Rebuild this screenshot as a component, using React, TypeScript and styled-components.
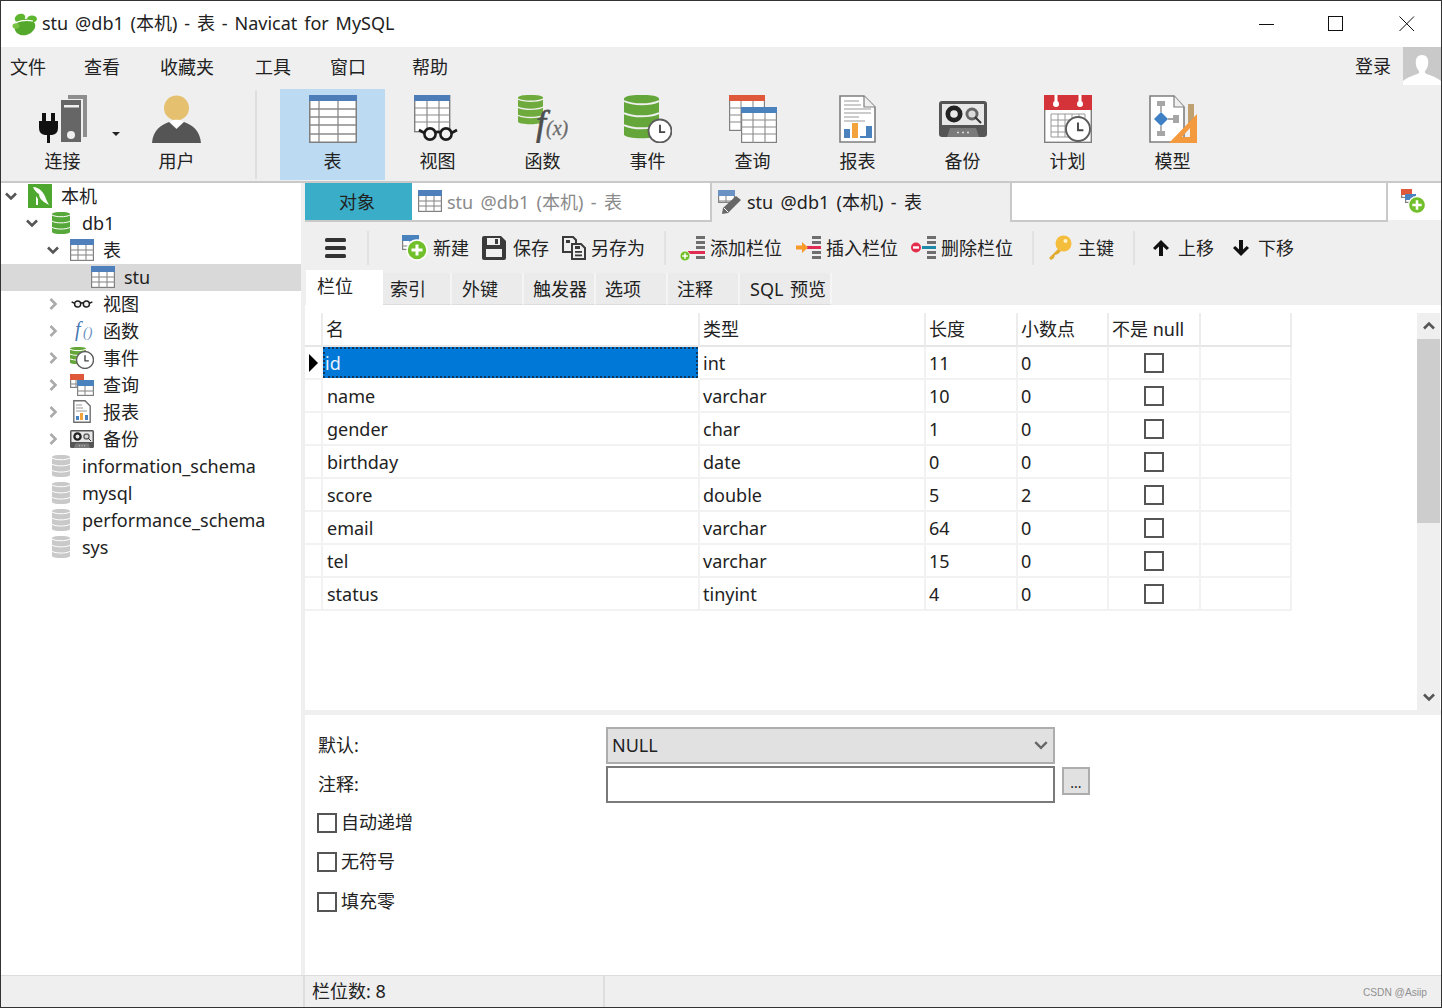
import React from "react";
import styled, { createGlobalStyle } from "styled-components";

const Global = createGlobalStyle`
  html, body { margin: 0; padding: 0; background: #fff; overflow: hidden; }
  * { box-sizing: border-box; }
  svg { display: block; flex: none; }
`;

const Root = styled.div`
  width: 1442px; height: 1008px; display: flex; flex-direction: column;
  border: 1px solid #333; border-bottom-width: 1px; background: #fff; color: #222;
  font-family: "Noto Sans", "Noto Sans CJK SC", sans-serif; font-size: 18px; line-height: 24px;
`;
const TitleBar = styled.div`height: 46px; display: flex; align-items: center; padding-left: 11px; background: #fff; flex: none;`;
const TitleText = styled.span`margin: 0 0 2px 4px; flex: 1; white-space: nowrap; word-spacing: 2.2px;`;
const WinBtn = styled.div<{ $w: number }>`width: ${p => p.$w}px; height: 46px; display: flex; align-items: center; justify-content: center;`;
const MenuBar = styled.div`height: 42px; flex: none; background: #efefef; display: flex; align-items: flex-start; padding-left: 9px;`;
const MenuItem = styled.span<{ $ml: number }>`margin-left: ${p => p.$ml}px; margin-top: 8px; white-space: nowrap;`;
const Login = styled.span`margin-left: auto; margin-top: 7px;`;
const Avatar = styled.div`width: 38px; height: 38px; margin-left: 12px; background: #c9c9c9;`;
const Toolbar = styled.div`height: 94px; flex: none; background: #efefef; border-bottom: 2px solid #c9c9c9; display: flex; align-items: flex-start; padding-left: 11px;`;
const ToolBtn = styled.div<{ $w?: number; $on?: boolean }>`
  width: ${p => p.$w ?? 105}px; height: 91px; padding-top: 6px; display: flex; flex-direction: column; align-items: center;
  background: ${p => (p.$on ? "#bcdaf2" : "transparent")};
`;
const ToolLabel = styled.span`margin-top: 6px; white-space: nowrap;`;
const Caret = styled.div`width: 12px; margin-left: -1px; padding-top: 43px;`;
const ToolSep = styled.div`width: 2px; height: 88px; margin: 2px 23px 0 26px; background: #dedede;`;

const Body = styled.div`flex: 1; min-height: 0; display: flex;`;
const Sidebar = styled.div`width: 300px; flex: none; background: #fff;`;
const Splitter = styled.div`width: 4px; flex: none; background: #efefef;`;
const TreeRow = styled.div<{ $d: number; $sel?: boolean }>`
  height: 27px; display: flex; align-items: center; padding: 0 0 2px ${p => 1 + p.$d * 21}px;
  background: ${p => (p.$sel ? "#d9d9d9" : "transparent")}; white-space: nowrap;
`;
const ArrowBox = styled.div`width: 18px; display: flex; justify-content: center; margin-right: 8px;`;
const TreeIcon = styled.div`width: 24px; margin-right: 9px; display: flex; justify-content: center;`;

const Main = styled.div`flex: 1; min-width: 0; display: flex; flex-direction: column; background: #efefef;`;
const TabBar = styled.div`height: 39px; flex: none; display: flex; align-items: stretch;`;
const ObjTab = styled.div`width: 107px; background: #3aaec8; border-bottom: 2px solid #c9c9c9; padding: 7px 0 0 34px;`;
const DocTab = styled.div<{ $on?: boolean; $w: number }>`
  width: ${p => p.$w}px; display: flex; align-items: flex-start; gap: 5px; padding: 7px 0 0 6px; word-spacing: 2.7px;
  background: ${p => (p.$on ? "#efefef" : "#fff")}; color: ${p => (p.$on ? "#222" : "#8a8a8a")};
  border-right: 2px solid #c9c9c9; border-bottom: ${p => (p.$on ? "0" : "2px solid #c9c9c9")}; white-space: nowrap;
`;
const TabFill = styled.div`flex: 1; background: #fff; border-right: 2px solid #c9c9c9; border-bottom: 2px solid #c9c9c9;`;
const TabAdd = styled.div`width: 53px; background: #fff; border-bottom: 2px solid #efefef; padding: 6px 0 0 12px;`;

const SubBar = styled.div`height: 48px; flex: none; display: flex; align-items: center; padding: 4px 0 0 20px;`;
const Sep = styled.div<{ $ml: number }>`width: 2px; height: 34px; background: #e2e2e2; margin-left: ${p => p.$ml}px;`;
const Item = styled.div<{ $ml?: number; $gap?: number }>`display: flex; align-items: center; margin-left: ${p => p.$ml ?? 0}px; gap: ${p => p.$gap ?? 5}px; white-space: nowrap;`;

const SubTabs = styled.div`height: 35px; flex: none; display: flex; align-items: flex-end; padding-left: 1px;`;
const SubTab = styled.div<{ $w: number; $pl: number; $on?: boolean }>`
  width: ${p => p.$w}px; height: ${p => (p.$on ? 35 : 32)}px; padding: 4px 0 0 ${p => p.$pl}px; white-space: nowrap; word-spacing: 2px;
  background: ${p => (p.$on ? "#fff" : "#ebebeb")};
  border-right: 2px solid ${p => (p.$on ? "#fff" : "#f5f5f5")};
  border-bottom: ${p => (p.$on ? "0" : "1px solid #dcdcdc")};
`;

const GridPane = styled.div`height: 405px; flex: none; background: #fff; display: flex; padding-top: 8px;`;
const GridArea = styled.div`width: 1112px; flex: none;`;
const Table = styled.div`display: grid; grid-template-columns: 18px 377px 226px 92px 91px 92px 91px; grid-template-rows: 34px; grid-auto-rows: 33px; width: 987px;`;
const Head = styled.div`height: 34px; padding-left: 3px; display: flex; align-items: center; border-right: 2px solid #ececec; border-bottom: 2px solid #e6e6e6; white-space: nowrap;`;
const Cell = styled.div<{ $center?: boolean; $pl?: number }>`
  display: flex; align-items: center; padding-left: ${p => (p.$center ? 0 : p.$pl ?? 3)}px; border-right: 2px solid #f2f2f2; border-bottom: 2px solid #f2f2f2;
  justify-content: ${p => (p.$center ? "center" : "flex-start")};
`;
const SelCell = styled.div`
  display: flex; align-items: center; padding-left: 2px; background: #0078d7; color: #e8f2fb;
  outline: 2px dotted #12365a; outline-offset: -2px; margin-bottom: 2px; margin-right: 2px;
`;
const Indicator = styled.div`display: flex; align-items: center; justify-content: center; border-right: 2px solid #f2f2f2; border-bottom: 2px solid #f2f2f2;`;
const Box = styled.div`width: 20px; height: 20px; border: 2px solid #555; background: #fff; flex: none;`;
const Scroll = styled.div`width: 23px; flex: none; background: #efefef; display: flex; flex-direction: column;`;
const ScrollBtn = styled.div<{ $end?: boolean }>`height: 26px; flex: none; display: flex; align-items: center; justify-content: center; margin-top: ${p => (p.$end ? "auto" : "0")};`;
const Thumb = styled.div`height: 184px; flex: none; background: #cdcdcd;`;
const HSplit = styled.div`height: 5px; flex: none; background: #efefef;`;

const Form = styled.div`flex: 1; min-height: 0; background: #fff; padding: 12px 0 0 13px;`;
const FormGrid = styled.div`display: grid; grid-template-columns: 288px 449px 35px; grid-template-rows: 37px 37px; row-gap: 2px; align-items: center;`;
const FormLabel = styled.span`padding-bottom: 2px;`;
const Select = styled.div`height: 37px; background: #e1e1e1; border: 2px solid #adadad; display: flex; align-items: center; justify-content: space-between; padding: 0 4px 2px 4px;`;
const Input = styled.div`height: 37px; background: #fff; border: 2px solid #7a7a7a;`;
const Dots = styled.div`width: 28px; height: 28px; margin-left: 7px; margin-top: -8px; background: #e1e1e1; border: 2px solid #adadad; font-size: 14px; line-height: 28px; text-align: center;`;
const CheckRow = styled.div`height: 39.5px; display: flex; align-items: center; gap: 4px; margin-left: -1px;`;
const CheckText = styled.span`padding-bottom: 2px;`;

const Status = styled.div`height: 32px; flex: none; display: flex; background: #efefef; border-top: 1px solid #dcdcdc; font-size: 18px;`;
const StatusCell = styled.div<{ $w: number }>`width: ${p => p.$w}px; flex: none; border-right: 2px solid #dedede; padding: 3px 0 0 7px; white-space: nowrap;`;
const StatusEnd = styled.div`flex: 1; display: flex; justify-content: flex-end; align-items: flex-end; padding: 0 14px 8px 0;`;
const Mark = styled.span`font-family: "Liberation Sans", sans-serif; font-size: 10.2px; line-height: 12px; color: #8f8f8f;`;

/* ---------- icons ---------- */
type S = { s?: number };
const Chev = ({ d = "down", c = "#555", s = 14, w = 2.6 }: { d?: "down" | "up" | "right"; c?: string; s?: number; w?: number }) => {
  const p = d === "down" ? "M2 4.5 7 9.5 12 4.5" : d === "up" ? "M2 9.5 7 4.5 12 9.5" : "M4.5 2 9.5 7 4.5 12";
  return <svg width={s} height={s} viewBox="0 0 14 14"><path d={p} fill="none" stroke={c} strokeWidth={w} /></svg>;
};

const Lines = ({ x, y, w, h, cols, rows, c = "#8a8a8a", sw = 1 }: { x: number; y: number; w: number; h: number; cols: number[]; rows: number[]; c?: string; sw?: number }) => (
  <g stroke={c} strokeWidth={sw} fill="none">
    {cols.map(v => <path key={"c" + v} d={`M${x + v} ${y}V${y + h}`} />)}
    {rows.map(v => <path key={"r" + v} d={`M${x} ${y + v}H${x + w}`} />)}
  </g>
);

const TableBig = ({ s = 48 }: S) => (
  <svg width={s} height={s} viewBox="0 0 48 48">
    <rect x=".75" y=".75" width="46.5" height="46.5" fill="#fff" stroke="#7f7f7f" strokeWidth="1.5" />
    <Lines x={1} y={6} w={46} h={41} cols={[9, 28]} rows={[8, 16, 24, 33]} sw={1.3} />
    <rect width="48" height="6" fill="#4d7db8" />
  </svg>
);
const Glasses = ({ x, y, k = 1 }: { x: number; y: number; k?: number }) => (
  <g transform={`translate(${x} ${y}) scale(${k})`} fill="none" stroke="#1c1c1c" strokeWidth="2.6">
    <circle cx="14" cy="7" r="5.6" fill="#f3f3f3" /><circle cx="30" cy="7" r="5.6" fill="#f3f3f3" />
    <path d="M19 6c2-1.5 4-1.5 6 0M8.5 6 3 3M35.5 6 41 3" />
  </g>
);
const ViewIcon = ({ s = 48 }: S) => (
  <svg width={s} height={s} viewBox="0 0 48 48">
    <rect x=".7" y=".7" width="35" height="36" fill="#fff" stroke="#7f7f7f" strokeWidth="1.4" />
    <Lines x={1} y={6} w={35} h={31} cols={[12, 24]} rows={[7, 14, 21]} sw={1.2} />
    <rect width="36" height="6" fill="#4d7db8" />
    <Glasses x={2} y={32} />
  </svg>
);
const DbShape = ({ x, y, w, h, c, bg = "#fff" }: { x: number; y: number; w: number; h: number; c: string; bg?: string }) => {
  const r = h * 0.09;
  return (
    <g>
      <path d={`M${x} ${y + r}C${x} ${y - r * .4} ${x + w} ${y - r * .4} ${x + w} ${y + r}V${y + h - r}C${x + w} ${y + h + r * .4} ${x} ${y + h + r * .4} ${x} ${y + h - r}Z`} fill={c} />
      <g fill="none" stroke={bg} strokeWidth={Math.max(1, h * .045)}>
        <path d={`M${x} ${y + h * .14}C${x + w * .25} ${y + h * .24} ${x + w * .75} ${y + h * .24} ${x + w} ${y + h * .14}`} />
        <path d={`M${x} ${y + h * .42}C${x + w * .25} ${y + h * .52} ${x + w * .75} ${y + h * .52} ${x + w} ${y + h * .42}`} />
        <path d={`M${x} ${y + h * .7}C${x + w * .25} ${y + h * .8} ${x + w * .75} ${y + h * .8} ${x + w} ${y + h * .7}`} />
      </g>
    </g>
  );
};
const FuncIcon = () => (
  <svg width="50" height="48" viewBox="0 0 50 48">
    <DbShape x={0} y={0} w={25} h={29} c="#6fab3c" bg="#efefef" />
    <text x="18" y="40" fontFamily="'Liberation Serif', serif" fontStyle="italic" fontSize="36" fill="#4d4d4d" stroke="#4d4d4d" strokeWidth=".6">f</text>
    <text x="28" y="40" fontFamily="'Liberation Serif', serif" fontStyle="italic" fontSize="20" fill="#6a6a6a" stroke="#6a6a6a" strokeWidth=".3">(x)</text>
  </svg>
);
const ClockMark = ({ cx, cy, r, bg = "#fff" }: { cx: number; cy: number; r: number; bg?: string }) => (
  <g>
    <circle cx={cx} cy={cy} r={r} fill={bg} stroke="#5c5c5c" strokeWidth={r * .16} />
    <path d={`M${cx} ${cy - r * .55}V${cy + r * .1}H${cx + r * .45}`} fill="none" stroke="#444" strokeWidth={r * .16} />
  </g>
);
const EventIcon = () => (
  <svg width="48" height="48" viewBox="0 0 48 48">
    <DbShape x={0} y={0} w={35} h={43} c="#64a639" bg="#efefef" />
    <ClockMark cx={36} cy={36} r={11.5} />
  </svg>
);
const HeadTable = ({ x, y, w, h, c, cols, rows }: { x: number; y: number; w: number; h: number; c: string; cols: number[]; rows: number[] }) => (
  <g>
    <rect x={x + .6} y={y + .6} width={w - 1.2} height={h - 1.2} fill="#fff" stroke="#808080" strokeWidth="1.2" />
    <Lines x={x} y={y + 6} w={w} h={h - 6} cols={cols} rows={rows} sw={1.1} />
    <rect x={x} y={y} width={w} height={6} fill={c} />
  </g>
);
const QueryIcon = () => (
  <svg width="48" height="48" viewBox="0 0 48 48">
    <HeadTable x={0} y={0} w={36} h={36} c="#e0583a" cols={[12, 24]} rows={[7, 14, 21]} />
    <HeadTable x={12} y={12} w={36} h={36} c="#4a82bd" cols={[12, 24]} rows={[7, 14, 21]} />
  </svg>
);
const ReportIcon = () => (
  <svg width="37" height="48" viewBox="0 0 37 48">
    <path d="M1 1H25L36 12V47H1Z" fill="#fff" stroke="#7f7f7f" strokeWidth="1.6" />
    <path d="M25 1V12H36" fill="#f0f0f0" stroke="#7f7f7f" strokeWidth="1.2" />
    <path d="M5 6H20M5 10H22M5 14H32M5 18H32M5 22H20M5 26H26" stroke="#9a9a9a" strokeWidth="1.1" />
    <rect x="5" y="34" width="6" height="9" fill="#4a82bd" /><rect x="13" y="28" width="6" height="15" fill="#f2a33c" />
    <rect x="21" y="41" width="6" height="2" fill="#4a82bd" /><rect x="27" y="31" width="6" height="12" fill="#4a82bd" />
  </svg>
);
const Cassette = ({ s = 48 }: S) => (
  <svg width={s} height={s} viewBox="0 0 48 36">
    <rect width="48" height="36" rx="3" fill="#555" />
    <rect x="3" y="3" width="42" height="21" fill="#e8e8e8" />
    <circle cx="15" cy="13" r="8.500" fill="#222" /><circle cx="15" cy="13" r="3.800" fill="#e8e8e8" />
    <circle cx="33" cy="13" r="6.500" fill="#666" /><circle cx="33" cy="13" r="3.600" fill="#dcdcdc" />
    <path d="M36 16l6 6" stroke="#333" strokeWidth="2" />
    <path d="M8 36l3-9H37l3 9Z" fill="#7a7a7a" />
    <path d="M18 31.500h2M23 31.500h2M28 31.500h2" stroke="#ddd" strokeWidth="1.6" />
  </svg>
);
const PlanIcon = () => (
  <svg width="48" height="48" viewBox="0 0 48 48">
    <rect x=".7" y="8" width="46.6" height="39.3" fill="#fff" stroke="#7f7f7f" strokeWidth="1.4" />
    <rect width="48" height="15" fill="#d5333a" />
    <path d="M12 0v8M36 0v8" stroke="#fff" strokeWidth="3" /><circle cx="12" cy="9" r="3" fill="#fff" /><circle cx="36" cy="9" r="3" fill="#fff" />
    <Lines x={7} y={19} w={34} h={23} cols={[0, 7, 14, 21, 28, 34]} rows={[0, 6, 12, 18, 23]} c="#999" />
    <ClockMark cx={34} cy={34} r={12} />
  </svg>
);
const ModelIcon = () => (
  <svg width="48" height="48" viewBox="0 0 48 48">
    <path d="M1 1H25L35 12V47H1Z" fill="#fff" stroke="#7f7f7f" strokeWidth="1.6" />
    <path d="M25 1V12H35" fill="#efefef" stroke="#7f7f7f" strokeWidth="1.2" />
    <rect x="8" y="6" width="8" height="5" fill="#a6a6a6" /><rect x="8" y="36" width="8" height="5" fill="#a6a6a6" /><rect x="24" y="20" width="6" height="8" fill="#a6a6a6" />
    <path d="M12 11V17M12 31V36M19 24H24" stroke="#8a8a8a" strokeWidth="1.3" />
    <path d="M12 17 19 24 12 31 5 24Z" fill="#3f7fc4" />
    <rect x="39" y="9" width="6" height="24" fill="#bfa070" />
    <path d="M48 19V48H20ZM41 33 33 42H41Z" fill="#f39a3f" fillRule="evenodd" />
  </svg>
);
const ConnectIcon = () => (
  <svg width="48" height="48" viewBox="0 0 48 48">
    <path d="M29 0H48V42H44V4H29Z" fill="#8e8e8e" />
    <rect x="22" y="5" width="20" height="42" fill="#666" />
    <rect x="25" y="10" width="15" height="2.500" fill="#efefef" /><circle cx="32" cy="40" r="4" fill="#efefef" />
    <path d="M3 18h4v8h5v-8h4v8h3v7q0 6-6 7h-2v8H8v-8H6q-6-1-6-7v-7h3Z" fill="#111" />
  </svg>
);
const UserIcon = () => (
  <svg width="49" height="48" viewBox="0 0 49 48">
    <circle cx="24.5" cy="13" r="12.5" fill="#e5c06f" />
    <path d="M0 48C1 35 9 30 17 27L24.5 34 32 27C40 30 48 35 49 48Z" fill="#555" />
    <path d="M18 26.5 24.5 33 31 26.5C27 24 22 24 18 26.5Z" fill="#fff" />
  </svg>
);
const LogoIcon = () => (
  <svg width="26" height="24" viewBox="0 0 26 24">
    <ellipse cx="13" cy="15" rx="10.500" ry="8" fill="#54a82c" transform="rotate(-20 13 15)" />
    <ellipse cx="8" cy="6" rx="5.500" ry="4" fill="#5eb52f" transform="rotate(-25 8 6)" />
    <ellipse cx="20" cy="7" rx="5" ry="3.500" fill="#5eb52f" />
    <ellipse cx="4" cy="14" rx="3.500" ry="2.800" fill="#79c143" />
    <path d="M4 10.500c5-2 11-2.500 17-1.500" stroke="#fff" strokeWidth="1.200" fill="none" />
  </svg>
);
const AvatarArt = () => (
  <svg width="38" height="38" viewBox="0 0 38 38">
    <path d="M19 8c5 0 7 4 6 10-.5 3-2 5-3 6v2c3 2 10 3 16 8v4H0v-4c6-5 13-6 16-8v-2c-1-1-2.500-3-3-6-1-6 1-10 6-10Z" fill="#fff" />
  </svg>
);
const MysqlIcon = () => (
  <svg width="24" height="24" viewBox="0 0 24 24">
    <rect width="24" height="24" fill="#4ea72e" />
    <path d="M5 3c6 0 11 5 13 12l3 6-5-3C13 16 11 13 11 10 9 9 6 6 5 3Z" fill="#fff" />
    <path d="M8 12v9h2v-6Z" fill="#fff" />
  </svg>
);
const DbTiny = ({ c }: { c: string }) => (
  <svg width="18" height="22" viewBox="0 0 18 22"><DbShape x={0} y={0} w={18} h={22} c={c} /></svg>
);
const TableTiny = () => (
  <svg width="24" height="22" viewBox="0 0 24 22">
    <HeadTable x={0} y={0} w={24} h={22} c="#4f80bb" cols={[8, 16]} rows={[5, 10]} />
  </svg>
);
const GlassesTiny = () => <svg width="24" height="12" viewBox="0 0 44 14"><Glasses x={0} y={0} /></svg>;
const FuncTiny = () => (
  <svg width="24" height="24" viewBox="0 0 24 24">
    <text x="5" y="17" fontFamily="'Liberation Serif', serif" fontStyle="italic" fontSize="20" fill="#4679b6">f</text>
    <text x="13" y="18" fontFamily="'Liberation Serif', serif" fontStyle="italic" fontSize="14" fill="#6a8fbf">()</text>
  </svg>
);
const EventTiny = () => (
  <svg width="24" height="22" viewBox="0 0 24 22">
    <DbShape x={0} y={0} w={16} h={17} c="#64a639" /><ClockMark cx={15} cy={13} r={8.5} />
  </svg>
);
const QueryTiny = () => (
  <svg width="24" height="22" viewBox="0 0 24 22">
    <HeadTable x={0} y={0} w={14} h={14} c="#e0583a" cols={[6]} rows={[4]} />
    <HeadTable x={7} y={6} w={17} h={16} c="#4a82bd" cols={[8]} rows={[5]} />
  </svg>
);
const ReportTiny = () => (
  <svg width="18" height="23" viewBox="0 0 18 23">
    <path d="M.8.8H12L17.200 6V22.200H.8Z" fill="#fff" stroke="#6f6f6f" strokeWidth="1.4" />
    <path d="M3 5H9M3 8H10M3 11H14" stroke="#999" />
    <rect x="3" y="16" width="3" height="4" fill="#4a82bd" /><rect x="7" y="13" width="3" height="7" fill="#f2a33c" /><rect x="12" y="15" width="3" height="5" fill="#4a82bd" />
  </svg>
);
const PlusDot = ({ cx, cy, r }: { cx: number; cy: number; r: number }) => (
  <g>
    <circle cx={cx} cy={cy} r={r} fill="#71c02b" stroke="#fff" strokeWidth={r * .15} />
    <path d={`M${cx - r * .55} ${cy}H${cx + r * .55}M${cx} ${cy - r * .55}V${cy + r * .55}`} stroke="#fff" strokeWidth={r * .3} />
  </g>
);
const NewIcon = () => (
  <svg width="26" height="26" viewBox="0 0 26 26">
    <HeadTable x={0} y={0} w={17} h={15} c="#4a82bd" cols={[8]} rows={[5]} />
    <PlusDot cx={15} cy={15} r={10} />
  </svg>
);
const SaveIcon = () => (
  <svg width="24" height="24" viewBox="0 0 24 24">
    <path d="M2 0H19L24 5V22a2 2 0 0 1-2 2H2a2 2 0 0 1-2-2V2A2 2 0 0 1 2 0Z" fill="#3a3a3a" />
    <rect x="5" y="2" width="13" height="7" fill="#f0f0f0" /><rect x="13" y="3" width="3" height="5" fill="#3a3a3a" />
    <rect x="4" y="13" width="16" height="8" fill="#f0f0f0" />
  </svg>
);
const SaveAsIcon = () => (
  <svg width="24" height="24" viewBox="0 0 24 24">
    <path d="M1 1H11L14 4V16H1Z" fill="#efefef" stroke="#3a3a3a" strokeWidth="2" />
    <path d="M4 4H8V7H4Z" fill="#3a3a3a" />
    <path d="M10 8H19L23 12V23H10Z" fill="#efefef" stroke="#3a3a3a" strokeWidth="2" />
    <rect x="13" y="15" width="7" height="1.800" fill="#3a3a3a" /><rect x="13" y="18.500" width="7" height="1.800" fill="#3a3a3a" />
    <rect x="13" y="10" width="5" height="3" fill="#3a3a3a" />
  </svg>
);
const Bars = ({ x, hi, c }: { x: number; hi: number; c: string }) => (
  <g>
    {[1, 6, 11, 16, 21].map((y, i) => <rect key={y} x={x} y={y} width="9" height="3" fill={i === hi ? c : "#6e6e6e"} />)}
  </g>
);
const AddColIcon = () => (
  <svg width="25" height="26" viewBox="0 0 25 26"><Bars x={16} hi={3} c="#e02b52" /><rect x="8" y="16" width="8" height="3" fill="#e02b52" /><PlusDot cx={5} cy={21} r={5} /></svg>
);
const InsColIcon = () => (
  <svg width="25" height="26" viewBox="0 0 25 26"><Bars x={16} hi={2} c="#e02b52" /><rect x="11" y="11" width="5" height="3" fill="#e02b52" /><path d="M0 10.500H6V7l6 5.500-6 5.500v-3.500H0Z" fill="#f79a2a" /></svg>
);
const DelColIcon = () => (
  <svg width="25" height="26" viewBox="0 0 25 26"><Bars x={16} hi={2} c="#1c8aa8" /><rect x="11" y="11" width="5" height="3" fill="#1c8aa8" /><circle cx="5" cy="12.500" r="5" fill="#e32d4d" /><rect x="2" y="11.300" width="6" height="2.400" fill="#fff" /></svg>
);
const KeyIcon = () => (
  <svg width="24" height="26" viewBox="0 0 24 26">
    <path d="M10 14 1 23l2 2 3-2 1-3 3-1 3-3Z" fill="#e0ab33" />
    <circle cx="15.500" cy="8.500" r="8" fill="#f4bd3c" /><circle cx="17.500" cy="6" r="2" fill="#fff3c9" />
  </svg>
);
const ArrowIcon = ({ up }: { up?: boolean }) => (
  <svg width="18" height="18" viewBox="0 0 18 18">
    <path d={up ? "M9 1 17 9l-2.200 2L11 7.500V17H7V7.500L3.200 11 1 9Z" : "M9 17 1 9l2.200-2L7 10.500V1h4V10.500L14.800 7 17 9Z"} fill="#111" />
  </svg>
);
const Hamburger = () => (
  <svg width="21" height="20" viewBox="0 0 21 20"><rect width="21" height="4" rx="1.500" fill="#333" /><rect y="8" width="21" height="4" rx="1.500" fill="#333" /><rect y="16" width="21" height="4" rx="1.500" fill="#333" /></svg>
);
const EditTabIcon = () => (
  <svg width="24" height="24" viewBox="0 0 24 24">
    <HeadTable x={0} y={0} w={17} h={13} c="#6b92c4" cols={[8]} rows={[5]} />
    <path d="M18 6l5 4L10 23l-6 1 1-6Z" fill="#666" /><path d="M6 18l4 4" stroke="#fff" />
  </svg>
);
const TabPlusIcon = () => (
  <svg width="26" height="26" viewBox="0 0 26 26">
    <HeadTable x={1} y={0} w={11} h={9} c="#e0583a" cols={[5]} rows={[]} />
    <HeadTable x={5} y={5} w={11} h={9} c="#4a82bd" cols={[5]} rows={[]} />
    <PlusDot cx={17} cy={16} r={8.500} />
  </svg>
);

/* ---------- data ---------- */
const menu = [["文件", 0], ["查看", 38], ["收藏夹", 40], ["工具", 41], ["窗口", 39], ["帮助", 46]] as const;
const tools: [string, React.ReactNode][] = [
  ["视图", <ViewIcon />], ["函数", <FuncIcon />], ["事件", <EventIcon />], ["查询", <QueryIcon />],
  ["报表", <ReportIcon />], ["备份", <Cassette />], ["计划", <PlanIcon />], ["模型", <ModelIcon />],
];
const tree: { d: number; t: string; i: React.ReactNode; a?: "down" | "right"; sel?: boolean }[] = [
  { d: 0, t: "本机", i: <MysqlIcon />, a: "down" },
  { d: 1, t: "db1", i: <DbTiny c="#57a83a" />, a: "down" },
  { d: 2, t: "表", i: <TableTiny />, a: "down" },
  { d: 3, t: "stu", i: <TableTiny />, sel: true },
  { d: 2, t: "视图", i: <GlassesTiny />, a: "right" },
  { d: 2, t: "函数", i: <FuncTiny />, a: "right" },
  { d: 2, t: "事件", i: <EventTiny />, a: "right" },
  { d: 2, t: "查询", i: <QueryTiny />, a: "right" },
  { d: 2, t: "报表", i: <ReportTiny />, a: "right" },
  { d: 2, t: "备份", i: <Cassette s={24} />, a: "right" },
  { d: 1, t: "information_schema", i: <DbTiny c="#c9c9c9" /> },
  { d: 1, t: "mysql", i: <DbTiny c="#c9c9c9" /> },
  { d: 1, t: "performance_schema", i: <DbTiny c="#c9c9c9" /> },
  { d: 1, t: "sys", i: <DbTiny c="#c9c9c9" /> },
];
const subTabs: [string, number, number][] = [
  ["栏位", 77, 11], ["索引", 69, 7], ["外键", 72, 10], ["触发器", 72, 9], ["选项", 72, 9], ["注释", 72, 9], ["SQL 预览", 92, 10],
];
const heads = ["名", "类型", "长度", "小数点", "不是 null", ""];
const rows: [string, string, string, string][] = [
  ["id", "int", "11", "0"], ["name", "varchar", "10", "0"], ["gender", "char", "1", "0"], ["birthday", "date", "0", "0"],
  ["score", "double", "5", "2"], ["email", "varchar", "64", "0"], ["tel", "varchar", "15", "0"], ["status", "tinyint", "4", "0"],
];

export default function App() {
  return (
    <Root>
      <Global />
      <TitleBar>
        <LogoIcon />
        <TitleText>stu @db1 (本机) - 表 - Navicat for MySQL</TitleText>
        <WinBtn $w={66}><svg width="16" height="16" viewBox="0 0 16 16"><path d="M0 8.500H15" stroke="#111" /></svg></WinBtn>
        <WinBtn $w={72}><svg width="16" height="16" viewBox="0 0 16 16"><rect x=".5" y=".5" width="14" height="14" fill="none" stroke="#111" /></svg></WinBtn>
        <WinBtn $w={69}><svg width="16" height="16" viewBox="0 0 16 16"><path d="M.5.500 15 15M15 .500.500 15" stroke="#111" /></svg></WinBtn>
      </TitleBar>
      <MenuBar>
        {menu.map(([t, ml]) => <MenuItem key={t} $ml={ml}>{t}</MenuItem>)}
        <Login>登录</Login>
        <Avatar><AvatarArt /></Avatar>
      </MenuBar>
      <Toolbar>
        <ToolBtn $w={101}><ConnectIcon /><ToolLabel>连接</ToolLabel></ToolBtn>
        <Caret><svg width="8" height="4" viewBox="0 0 8 4"><path d="M0 0H8L4 4Z" fill="#222" /></svg></Caret>
        <ToolBtn><UserIcon /><ToolLabel>用户</ToolLabel></ToolBtn>
        <ToolSep />
        <ToolBtn $on><TableBig /><ToolLabel>表</ToolLabel></ToolBtn>
        {tools.map(([t, i]) => <ToolBtn key={t}>{i}<ToolLabel>{t}</ToolLabel></ToolBtn>)}
      </Toolbar>
      <Body>
        <Sidebar>
          {tree.map(n => (
            <TreeRow key={n.t + n.d} $d={n.d} $sel={n.sel}>
              <ArrowBox>
                {n.a ? <Chev d={n.a} c={n.a === "down" ? "#555" : "#aaa"} /> : <Chev c="transparent" />}
              </ArrowBox>
              <TreeIcon>{n.i}</TreeIcon>
              {n.t}
            </TreeRow>
          ))}
        </Sidebar>
        <Splitter />
        <Main>
          <TabBar>
            <ObjTab>对象</ObjTab>
            <DocTab $w={300}><TableTiny />stu @db1 (本机) - 表</DocTab>
            <DocTab $on $w={300}><EditTabIcon />stu @db1 (本机) - 表</DocTab>
            <TabFill />
            <TabAdd><TabPlusIcon /></TabAdd>
          </TabBar>
          <SubBar>
            <Hamburger />
            <Sep $ml={21} />
            <Item $ml={33}><NewIcon />新建</Item>
            <Item $ml={13} $gap={7}><SaveIcon />保存</Item>
            <Item $ml={13}><SaveAsIcon />另存为</Item>
            <Sep $ml={19} />
            <Item $ml={14}><AddColIcon />添加栏位</Item>
            <Item $ml={14}><InsColIcon />插入栏位</Item>
            <Item $ml={13}><DelColIcon />删除栏位</Item>
            <Sep $ml={19} />
            <Item $ml={14} $gap={6}><KeyIcon />主键</Item>
            <Sep $ml={19} />
            <Item $ml={17} $gap={8}><ArrowIcon up />上移</Item>
            <Item $ml={18} $gap={8}><ArrowIcon />下移</Item>
          </SubBar>
          <SubTabs>
            {subTabs.map(([t, w, pl], i) => <SubTab key={t} $w={w} $pl={pl} $on={i === 0}>{t}</SubTab>)}
          </SubTabs>
          <GridPane>
            <GridArea>
              <Table>
                <Head />
                {heads.map(h => <Head key={h}>{h}</Head>)}
                {rows.map((r, i) => (
                  <React.Fragment key={r[0]}>
                    <Indicator>
                      {i === 0 && <svg width="9" height="18" viewBox="0 0 9 18"><path d="M0 0 9 9 0 18Z" fill="#000" /></svg>}
                    </Indicator>
                    {i === 0 ? <SelCell>{r[0]}</SelCell> : <Cell $pl={4}>{r[0]}</Cell>}
                    <Cell>{r[1]}</Cell>
                    <Cell>{r[2]}</Cell>
                    <Cell>{r[3]}</Cell>
                    <Cell $center><Box /></Cell>
                    <Cell />
                  </React.Fragment>
                ))}
              </Table>
            </GridArea>
            <Scroll>
              <ScrollBtn><Chev d="up" /></ScrollBtn>
              <Thumb />
              <ScrollBtn $end><Chev d="down" /></ScrollBtn>
            </Scroll>
          </GridPane>
          <HSplit />
          <Form>
            <FormGrid>
              <FormLabel>默认:</FormLabel>
              <Select>NULL<Chev c="#666" w={2} s={16} /></Select>
              <span />
              <FormLabel>注释:</FormLabel>
              <Input />
              <Dots>...</Dots>
            </FormGrid>
            <CheckRow><Box /><CheckText>自动递增</CheckText></CheckRow>
            <CheckRow><Box /><CheckText>无符号</CheckText></CheckRow>
            <CheckRow><Box /><CheckText>填充零</CheckText></CheckRow>
          </Form>
        </Main>
      </Body>
      <Status>
        <StatusCell $w={304} />
        <StatusCell $w={300}>栏位数: 8</StatusCell>
        <StatusEnd><Mark>CSDN @Asiip</Mark></StatusEnd>
      </Status>
    </Root>
  );
}
